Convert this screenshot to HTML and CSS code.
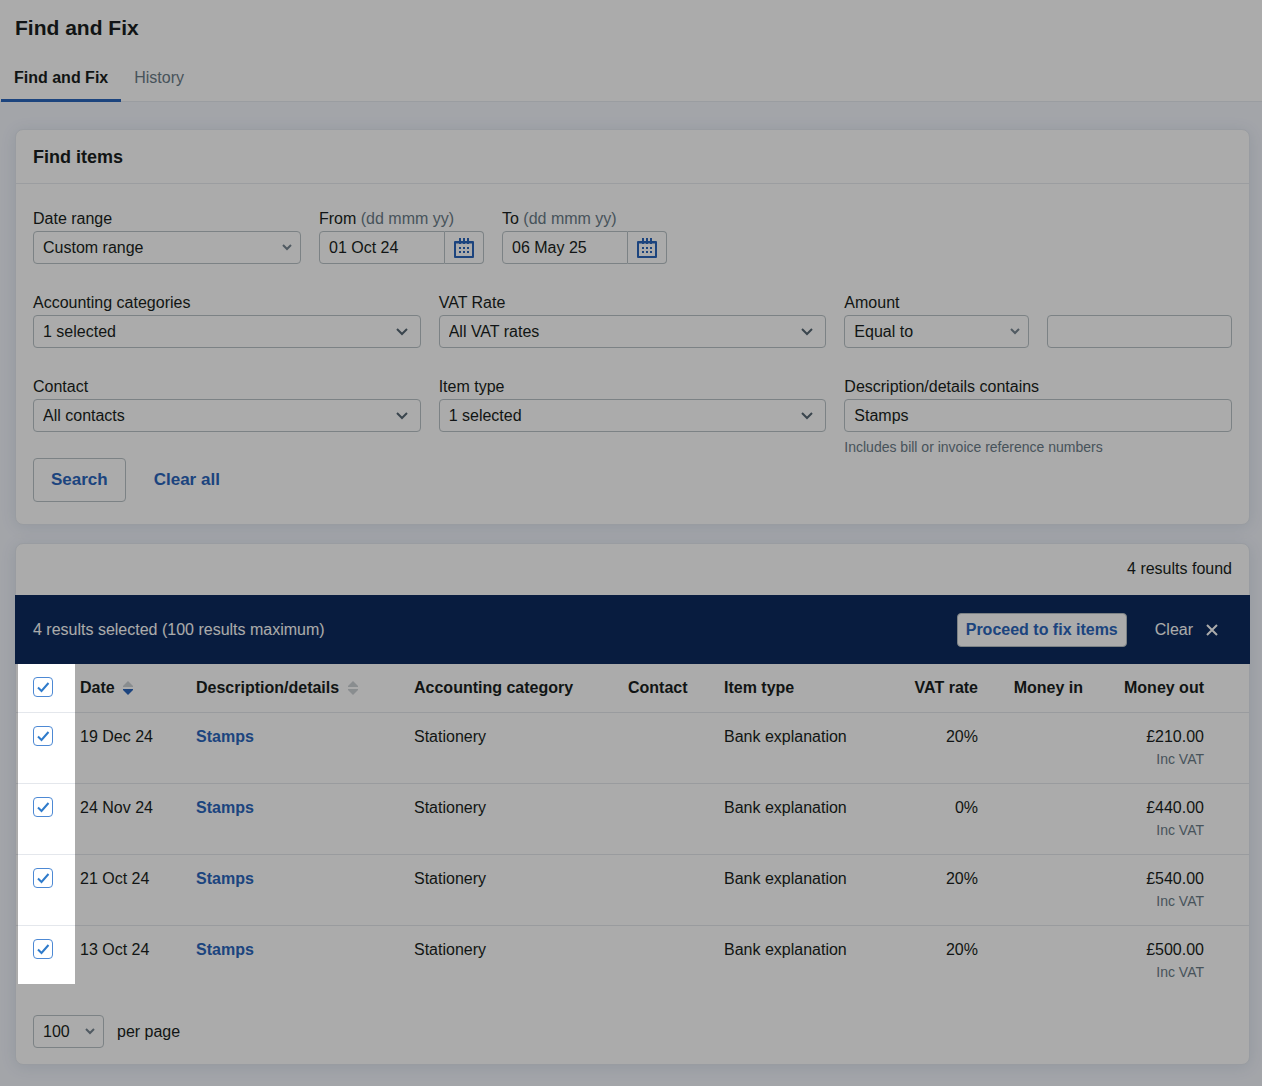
FILE: index.html
```html
<!DOCTYPE html>
<html lang="en">
<head>
    <meta charset="UTF-8">
    <title>Find and Fix</title>
    <link rel="stylesheet" href="styles.css">
</head>
<body>
    <header class="page-header">
        <h1>Find and Fix</h1>
        <nav class="tabs">
            <a href="#find" class="tab active">Find and Fix</a>
            <a href="#history" class="tab">History</a>
        </nav>
    </header>

    <main>
        <section class="card">
            <h2>Find items</h2>
            <form class="filters">
                <div class="dates">
                    <div class="field range">
                        <label for="date-range">Date range</label>
                        <select id="date-range"><option>Custom range</option></select>
                    </div>
                    <div class="field">
                        <label for="from">From <span class="muted">(dd mmm yy)</span></label>
                        <div class="date-input">
                            <input type="text" id="from" value="01 Oct 24">
                            <button type="button" aria-label="Choose from date">
                                <svg width="20" height="20" viewBox="0 0 20 20">
                                    <path d="M1 4h18v15H1z" fill="none" stroke="currentColor" stroke-width="2" stroke-linejoin="round"/>
                                    <path d="M1 4.5h18M6 0v6M10 0v6M14 0v6" fill="none" stroke="currentColor" stroke-width="2"/>
                                    <path d="M5 10h10M5 14h10" fill="none" stroke="currentColor" stroke-width="2" stroke-dasharray="2 2"/>
                                </svg>
                            </button>
                        </div>
                    </div>
                    <div class="field">
                        <label for="to">To <span class="muted">(dd mmm yy)</span></label>
                        <div class="date-input">
                            <input type="text" id="to" value="06 May 25">
                            <button type="button" aria-label="Choose to date">
                                <svg width="20" height="20" viewBox="0 0 20 20">
                                    <path d="M1 4h18v15H1z" fill="none" stroke="currentColor" stroke-width="2" stroke-linejoin="round"/>
                                    <path d="M1 4.5h18M6 0v6M10 0v6M14 0v6" fill="none" stroke="currentColor" stroke-width="2"/>
                                    <path d="M5 10h10M5 14h10" fill="none" stroke="currentColor" stroke-width="2" stroke-dasharray="2 2"/>
                                </svg>
                            </button>
                        </div>
                    </div>
                </div>

                <div class="grid">
                    <div class="field">
                        <label for="categories">Accounting categories</label>
                        <select id="categories" class="multi"><option>1 selected</option></select>
                    </div>
                    <div class="field">
                        <label for="vat-rate">VAT Rate</label>
                        <select id="vat-rate" class="multi"><option>All VAT rates</option></select>
                    </div>
                    <div class="field">
                        <label for="amount-type">Amount</label>
                        <div class="amount">
                            <select id="amount-type"><option>Equal to</option></select>
                            <input type="text" id="amount" aria-label="Amount value">
                        </div>
                    </div>
                    <div class="field">
                        <label for="contact">Contact</label>
                        <select id="contact" class="multi"><option>All contacts</option></select>
                    </div>
                    <div class="field">
                        <label for="item-type">Item type</label>
                        <select id="item-type" class="multi"><option>1 selected</option></select>
                    </div>
                    <div class="field">
                        <label for="description">Description/details contains</label>
                        <input type="text" id="description" value="Stamps">
                        <p class="hint muted">Includes bill or invoice reference numbers</p>
                    </div>
                </div>

                <div class="actions">
                    <button type="submit" class="search">Search</button>
                    <button type="reset" class="clear-all">Clear all</button>
                </div>
            </form>
        </section>

        <section class="card">
            <p class="found">4 results found</p>
            <div class="selection">
                <span>4 results selected (100 results maximum)</span>
                <button type="button" class="proceed">Proceed to fix items</button>
                <button type="button" class="clear">
                    Clear
                    <svg width="12" height="12" viewBox="0 0 12 12"><path d="M1 1l10 10M11 1L1 11" stroke="currentColor" stroke-width="2"/></svg>
                </button>
            </div>
            <div class="results">
                <table>
                    <colgroup>
                        <col class="col-check">
                        <col class="col-date">
                        <col>
                        <col class="col-category">
                        <col class="col-contact">
                        <col class="col-type">
                        <col class="col-vat">
                        <col class="col-in">
                        <col class="col-out">
                    </colgroup>
                    <thead>
                        <tr>
                            <th><input type="checkbox" aria-label="Select all" checked></th>
                            <th>Date
                                <svg class="sort desc" width="10" height="14" viewBox="0 0 10 14"><path class="up" d="M5 0l5 5v1H0V5z"/><path class="down" d="M0 8h10v1l-5 5-5-5z"/></svg>
                            </th>
                            <th>Description/details
                                <svg class="sort" width="10" height="14" viewBox="0 0 10 14"><path class="up" d="M5 0l5 5v1H0V5z"/><path class="down" d="M0 8h10v1l-5 5-5-5z"/></svg>
                            </th>
                            <th>Accounting category</th>
                            <th>Contact</th>
                            <th>Item type</th>
                            <th class="number">VAT rate</th>
                            <th class="number">Money in</th>
                            <th class="number">Money out</th>
                        </tr>
                    </thead>
                    <tbody>
                        <tr>
                            <td><input type="checkbox" aria-label="Select 19 Dec 24" checked></td>
                            <td>19 Dec 24</td>
                            <td><a href="#item-1">Stamps</a></td>
                            <td>Stationery</td>
                            <td></td>
                            <td>Bank explanation</td>
                            <td class="number">20%</td>
                            <td class="number"></td>
                            <td class="number">£210.00<small class="muted">Inc VAT</small></td>
                        </tr>
                        <tr>
                            <td><input type="checkbox" aria-label="Select 24 Nov 24" checked></td>
                            <td>24 Nov 24</td>
                            <td><a href="#item-2">Stamps</a></td>
                            <td>Stationery</td>
                            <td></td>
                            <td>Bank explanation</td>
                            <td class="number">0%</td>
                            <td class="number"></td>
                            <td class="number">£440.00<small class="muted">Inc VAT</small></td>
                        </tr>
                        <tr>
                            <td><input type="checkbox" aria-label="Select 21 Oct 24" checked></td>
                            <td>21 Oct 24</td>
                            <td><a href="#item-3">Stamps</a></td>
                            <td>Stationery</td>
                            <td></td>
                            <td>Bank explanation</td>
                            <td class="number">20%</td>
                            <td class="number"></td>
                            <td class="number">£540.00<small class="muted">Inc VAT</small></td>
                        </tr>
                        <tr>
                            <td><input type="checkbox" aria-label="Select 13 Oct 24" checked></td>
                            <td>13 Oct 24</td>
                            <td><a href="#item-4">Stamps</a></td>
                            <td>Stationery</td>
                            <td></td>
                            <td>Bank explanation</td>
                            <td class="number">20%</td>
                            <td class="number"></td>
                            <td class="number">£500.00<small class="muted">Inc VAT</small></td>
                        </tr>
                    </tbody>
                </table>
                <div class="spotlight"></div>
            </div>
            <div class="paging">
                <select id="per-page"><option>100</option></select>
                <label for="per-page">per page</label>
            </div>
        </section>
    </main>
</body>
</html>
```
FILE: styles.css
```css
* {
    box-sizing: border-box;
}
body {
    margin: 0;
    min-height: 100vh;
    font-family: "Liberation Sans", Arial, sans-serif;
    font-size: 16px;
    line-height: 24px;
    color: #1a1f21;
    background-color: #f3f6fd;
}
h1, h2, p {
    margin: 0;
}
input, select, button {
    font: inherit;
    color: inherit;
    margin: 0;
}
a {
    color: #2b66bd;
    font-weight: bold;
    text-decoration: none;
}
.muted {
    color: #6b7c88;
}

/* header */
.page-header {
    background-color: white;
    padding-top: 14px;
    border-bottom: 1px solid #e6eaf0;
}
h1 {
    font-size: 21px;
    line-height: 28px;
    padding: 0 15px 12px;
}
.tabs {
    display: flex;
    padding-left: 1px;
    margin-bottom: -1px;
}
.tab {
    height: 48px;
    padding: 12px 13px 0;
    color: #6b7c88;
    font-weight: normal;
}
.tab.active {
    color: #1a1f21;
    font-weight: bold;
    border-bottom: 3px solid #2b66bd;
}

main {
    padding: 27px 12px 21px 15px;
}
.card {
    background-color: white;
    border: 1px solid #e4e9f0;
    border-radius: 8px;
    box-shadow: 0 2px 16px rgba(20, 60, 100, 0.1);
    margin-bottom: 18px;
}
.card:last-child {
    margin-bottom: 0;
}
h2 {
    font-size: 18px;
    line-height: 26px;
    padding: 14px 17px 13px;
    border-bottom: 1px solid #e8ebef;
}

/* filters */
.filters {
    padding: 23px 17px 22px;
}
.dates {
    display: flex;
    gap: 18px;
    margin-bottom: 27px;
}
.dates .field {
    width: 165px;
}
.dates .range {
    width: 268px;
}
.grid {
    display: grid;
    grid-template-columns: repeat(3, 1fr);
    gap: 27px 18px;
}
.field label {
    display: block;
}
.field select, .field input, .paging select {
    display: block;
    width: 100%;
    height: 33px;
    padding: 0 9px;
    border: 1px solid #b9c2c6;
    border-radius: 4px;
    background-color: white;
}
.field select, .paging select {
    appearance: none;
    background-image: url("data:image/svg+xml,%3Csvg xmlns='http://www.w3.org/2000/svg' width='10' height='7'%3E%3Cpath d='M1 1l4 4 4-4' fill='none' stroke='%23788792' stroke-width='2'/%3E%3C/svg%3E");
    background-repeat: no-repeat;
    background-position: right 8px center;
}
.field .multi {
    background-image: url("data:image/svg+xml,%3Csvg xmlns='http://www.w3.org/2000/svg' width='12' height='8'%3E%3Cpath d='M1 1l5 5 5-5' fill='none' stroke='%23576874' stroke-width='2'/%3E%3C/svg%3E");
    background-position: right 12px center;
}
.date-input {
    display: flex;
}
.date-input input {
    flex: 1;
    min-width: 0;
    border-radius: 4px 0 0 4px;
}
.date-input button {
    display: flex;
    align-items: center;
    justify-content: center;
    width: 39px;
    padding: 0;
    color: #2b66bd;
    background-color: white;
    border: 1px solid #b9c2c6;
    border-left: 0;
    border-radius: 0 4px 4px 0;
}
.amount {
    display: grid;
    grid-template-columns: 1fr 1fr;
    gap: 18px;
}
.hint {
    font-size: 14px;
    line-height: 20px;
    padding-top: 5px;
}
.actions {
    display: flex;
    gap: 28px;
    margin-top: 1px;
}
.actions button {
    height: 44px;
    font-size: 17px;
    font-weight: bold;
    color: #2b66bd;
    background: none;
    border: 0;
    padding: 0;
}
.actions .search {
    padding: 0 17px;
    border: 1px solid #b9c2c6;
    border-radius: 4px;
}

/* results */
.found {
    text-align: right;
    padding: 13px 17px 14px;
}
.selection {
    display: flex;
    align-items: center;
    gap: 28px;
    margin: 0 -1px;
    padding: 18px 32px 17px 18px;
    color: white;
    background-color: #0d2b5e;
}
.selection span {
    flex: 1;
}
.proceed {
    height: 34px;
    padding: 0 8px;
    color: #2b66bd;
    font-weight: bold;
    background-color: white;
    border: 1px solid #b9c2c6;
    border-radius: 4px;
}
.clear {
    display: flex;
    align-items: center;
    gap: 13px;
    padding: 0;
    border: 0;
    background: none;
}
.results {
    position: relative;
}
table {
    width: 100%;
    table-layout: fixed;
    border-collapse: separate;
    border-spacing: 0;
}
.col-check { width: 59px; }
.col-date { width: 116px; }
.col-category { width: 214px; }
.col-contact { width: 96px; }
.col-type { width: 150px; }
.col-vat { width: 114px; }
.col-in { width: 105px; }
.col-out { width: 161px; }
th, td {
    padding: 12px 5px;
    text-align: left;
    vertical-align: top;
    white-space: nowrap;
    border-bottom: 1px solid #e4e7ec;
}
td {
    height: 71px;
}
tbody tr:last-child td {
    border-bottom: 0;
}
th:first-child, td:first-child {
    padding-left: 17px;
}
.number {
    text-align: right;
}
.number:last-child {
    padding-right: 45px;
}
small {
    display: block;
    font-size: 14px;
    line-height: 20px;
}
.sort {
    margin-left: 4px;
    vertical-align: -2px;
    fill: #cdd2d6;
}
.sort.desc .down {
    fill: #2b66bd;
}
input[type="checkbox"] {
    appearance: none;
    display: block;
    width: 20px;
    height: 20px;
    margin-top: 1px;
    border: 1px solid #4d89d4;
    border-radius: 4px;
    background-color: white;
}
input[type="checkbox"]:checked {
    background-image: url("data:image/svg+xml,%3Csvg xmlns='http://www.w3.org/2000/svg' width='18' height='18'%3E%3Cpath d='M4 9.5l3.5 3.5L14.5 5' fill='none' stroke='%232f7bcb' stroke-width='2'/%3E%3C/svg%3E");
}

/* dims everything except the checkbox column */
.spotlight {
    position: absolute;
    top: 0;
    bottom: 13px;
    left: 2px;
    width: 57px;
    box-shadow: 0 0 0 3000px rgba(0, 0, 0, 0.33);
    pointer-events: none;
}

.paging {
    display: flex;
    align-items: center;
    gap: 13px;
    padding: 18px 17px 16px;
}
.paging select {
    width: 71px;
}
```
